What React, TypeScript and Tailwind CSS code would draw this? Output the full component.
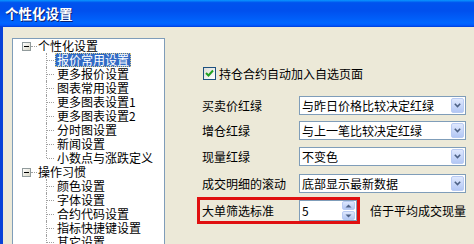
import React from 'react';

const font = { fontFamily: '"Noto Sans CJK SC", "Noto Sans", sans-serif' };

type Node = { label: string; children?: string[] };

const tree: Node[] = [
  {
    label: '个性化设置',
    children: ['报价常用设置', '更多报价设置', '图表常用设置', '更多图表设置1', '更多图表设置2', '分时图设置', '新闻设置', '小数点与涨跌定义'],
  },
  {
    label: '操作习惯',
    children: ['颜色设置', '字体设置', '合约代码设置', '指标快捷键设置', '其它设置'],
  },
];

function MinusBox() {
  return (
    <div className="w-[9px] h-[9px] border border-[#919b9c] bg-gradient-to-br from-white to-[#d8d6c6] flex items-center justify-center">
      <div className="w-[5px] h-px bg-black" />
    </div>
  );
}

function RootRow({ label }: { label: string }) {
  return (
    <div className="h-[14px] flex items-center pl-[9px]">
      <MinusBox />
      <div className="w-[6px] border-t border-dotted border-[#a0a0a0]" />
      <span className="pl-[1px] text-[12px] leading-[14px] text-black whitespace-nowrap">{label}</span>
    </div>
  );
}

function ChildRow({ label, last, selected }: { label: string; last: boolean; selected: boolean }) {
  return (
    <div className="h-[14px] flex items-center pl-[33px]">
      <div className="relative w-[9px] h-[14px] shrink-0">
        <div className={`absolute left-0 top-0 border-l border-dotted border-[#a0a0a0] ${last ? 'h-[7px]' : 'h-[14px]'}`} />
        <div className="absolute left-[1px] top-[7px] w-[7px] border-t border-dotted border-[#a0a0a0]" />
      </div>
      <span
        className={`h-[14px] px-[1px] text-[12px] leading-[12px] whitespace-nowrap border border-dotted ${
          selected ? 'bg-[#316ac5] text-white border-[#d8c98a]' : 'text-black border-transparent'
        }`}
      >
        {label}
      </span>
    </div>
  );
}

function ComboArrow() {
  return (
    <div className="w-[13px] h-[15px] rounded-[2px] border border-[#b9cbf3] bg-gradient-to-b from-[#dfe8fd] to-[#b3c7f4] flex items-center justify-center">
      <svg width="7" height="5" viewBox="0 0 7 5">
        <polyline points="0.8,0.8 3.5,3.5 6.2,0.8" fill="none" stroke="#4d6185" strokeWidth="1.6" />
      </svg>
    </div>
  );
}

function Combo({ value }: { value: string }) {
  return (
    <div className="w-[167px] h-[19px] border border-[#7f9db9] bg-white flex items-center justify-between pl-[2px] pr-px">
      <span className="text-[12px] leading-[14px] text-black whitespace-nowrap">{value}</span>
      <ComboArrow />
    </div>
  );
}

function SpinBtn({ up }: { up: boolean }) {
  return (
    <div className="w-[13px] h-[9px] rounded-[2px] border border-[#b9cbf3] bg-gradient-to-b from-[#dfe8fd] to-[#b3c7f4] flex items-center justify-center">
      <svg width="7" height="4" viewBox="0 0 7 4">
        {up ? (
          <polygon points="0.5,3.5 3.5,0.5 6.5,3.5" fill="#4d6185" />
        ) : (
          <polygon points="0.5,0.5 3.5,3.5 6.5,0.5" fill="#4d6185" />
        )}
      </svg>
    </div>
  );
}

const rows: [string, string][] = [
  ['买卖价红绿', '与昨日价格比较决定红绿'],
  ['增仓红绿', '与上一笔比较决定红绿'],
  ['现量红绿', '不变色'],
  ['成交明细的滚动', '底部显示最新数据'],
];
const rowGaps = ['mt-[16px]', 'mt-[6px]', 'mt-[7px]', 'mt-[8px]'];

export default function App() {
  return (
    <div className="w-[474px] h-[244px] overflow-hidden flex flex-col select-none" style={font}>
      {/* title bar */}
      <div className="h-[27px] shrink-0 flex items-center pl-[5px] bg-[linear-gradient(to_bottom,#0997ff_0%,#0053ee_10%,#0050ee_40%,#0066ff_85%,#005bff_93%,#003dd7_100%)]">
        <span className="text-white font-bold text-[13.5px] leading-none [text-shadow:1px_1px_0_#0a1e6e]">个性化设置</span>
      </div>

      <div className="flex-1 flex border-l-[3px] border-[#0842d8] bg-[#ece9d8]">
        {/* tree */}
        <div className="ml-[9px] mt-[11px] w-[153px] h-[230px] shrink-0 border border-[#7f9db9] bg-white overflow-hidden">
          {tree.map((node) => (
            <div key={node.label}>
              <RootRow label={node.label} />
              {node.children?.map((c, i) => (
                <ChildRow
                  key={c}
                  label={c}
                  selected={c === '报价常用设置'}
                  last={node.label === '个性化设置' && i === node.children!.length - 1}
                />
              ))}
            </div>
          ))}
        </div>

        {/* settings */}
        <div className="ml-[32px] flex flex-col">
          <div className="mt-[40px] h-[13px] flex items-center pl-[6px]">
            <div className="w-[13px] h-[13px] border border-[#1c5180] bg-gradient-to-br from-[#dcdcd7] to-white flex items-center justify-center">
              <svg width="9" height="9" viewBox="0 0 9 9">
                <polyline points="1,4 3.5,6.5 8,1.5" fill="none" stroke="#21a121" strokeWidth="2" />
              </svg>
            </div>
            <span className="ml-[3px] text-[12px] leading-[14px] text-black whitespace-nowrap">持仓合约自动加入自选页面</span>
          </div>

          {rows.map(([label, value], i) => (
            <div key={label} className={`${rowGaps[i]} flex items-center pl-[5px]`}>
              <span className="w-[97px] text-[12px] leading-[14px] text-black whitespace-nowrap">{label}</span>
              <Combo value={value} />
            </div>
          ))}

          <div className="mt-[4px] flex items-center">
            <div className="border-[3px] border-[#e01010] flex items-center pl-[2px]">
              <span className="w-[97px] text-[12px] leading-[14px] text-black whitespace-nowrap">大单筛选标准</span>
              <div className="w-[58px] h-[21px] border border-[#7f9db9] bg-white flex items-center justify-between pl-[2px] pr-px">
                <span className="text-[12px] leading-[14px] text-black">5</span>
                <div className="flex flex-col gap-px">
                  <SpinBtn up />
                  <SpinBtn up={false} />
                </div>
              </div>
            </div>
            <span className="ml-[10px] text-[12px] leading-[14px] text-black whitespace-nowrap">倍于平均成交现量</span>
          </div>
        </div>
      </div>
    </div>
  );
}
